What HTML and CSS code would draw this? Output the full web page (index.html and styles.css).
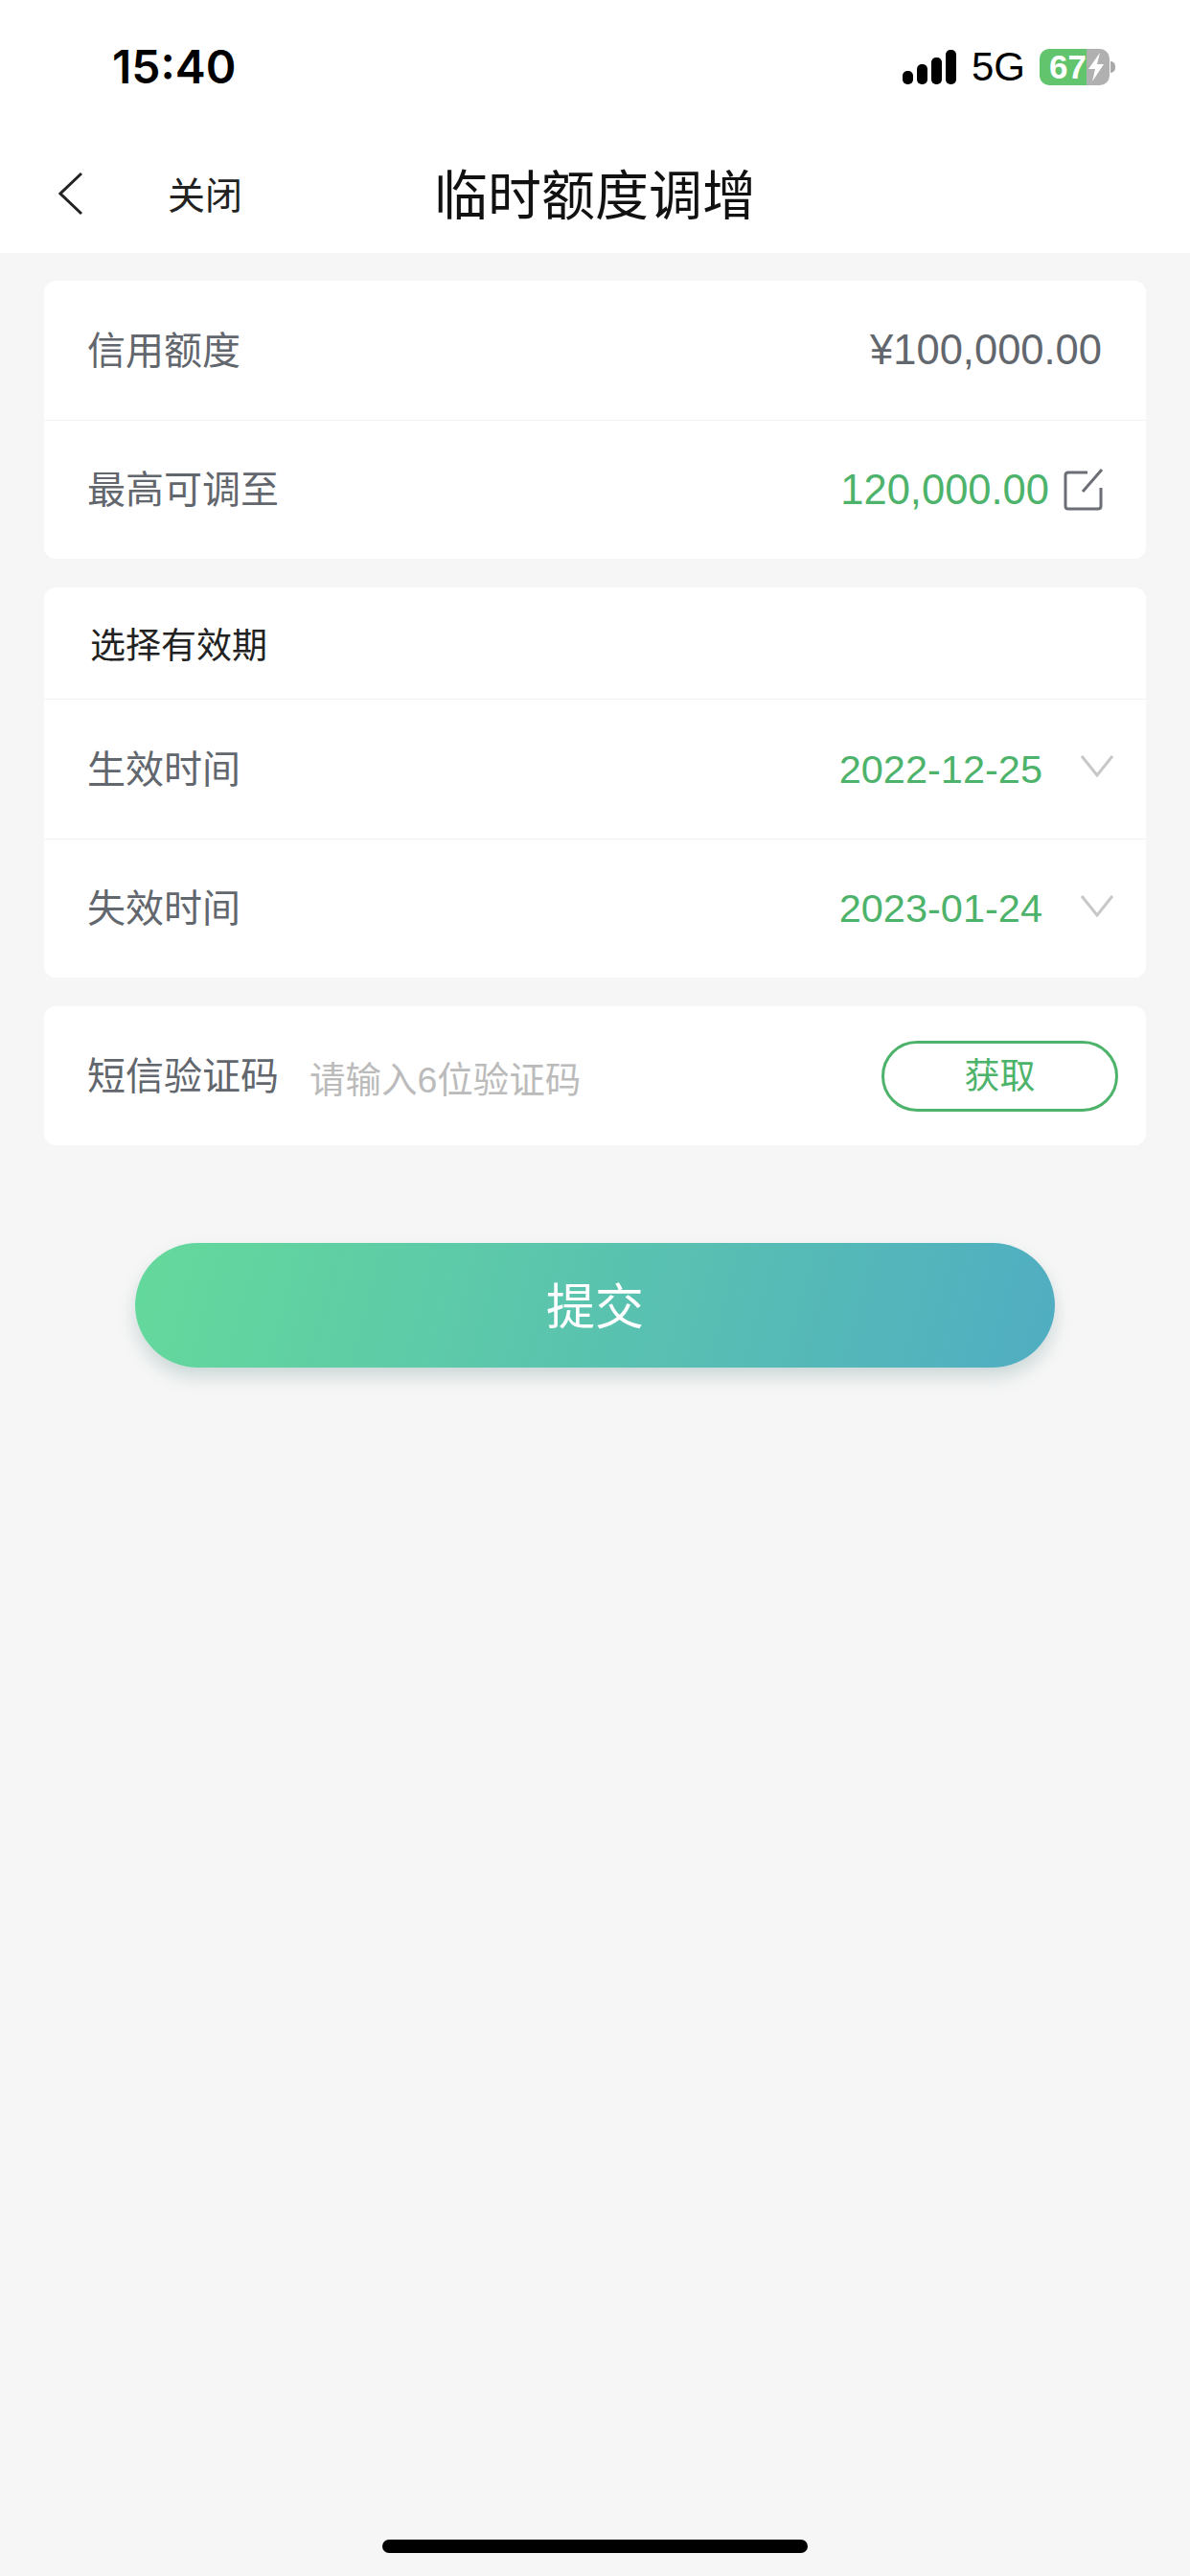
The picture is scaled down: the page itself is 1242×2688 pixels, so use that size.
FILE: index.html
```html
<!DOCTYPE html>
<html lang="zh-CN">
<head>
  <meta charset="UTF-8">
  <meta name="viewport" content="width=device-width, initial-scale=1.0">
  <title>临时额度调增</title>
  <link rel="stylesheet" href="styles.css">
</head>
<body>

  <div class="page">
    <div class="statusbar">
      <div class="time">15:40</div>
      <div class="status-right">
        <svg class="signal" width="56" height="36" viewBox="0 0 56 36">
          <rect x="0" y="22" width="11" height="14" rx="5" fill="#000"/>
          <rect x="15" y="15" width="11" height="21" rx="5" fill="#000"/>
          <rect x="30" y="8" width="11" height="28" rx="5" fill="#000"/>
          <rect x="45" y="0" width="11" height="36" rx="5" fill="#000"/>
        </svg>
        <span class="network">5G</span>
        <div class="battery">
          <div class="battery-body">
            <span class="battery-level">67</span>
            <svg class="bolt" width="18" height="30" viewBox="0 0 18 30">
              <path d="M13 0 L1 17 H8 L5 30 L17 12 H10 Z" fill="#fff"/>
            </svg>
          </div>
          <div class="battery-tip"></div>
        </div>
      </div>
    </div>

    <div class="navbar">
      <div class="nav-left">
        <svg class="back" width="26" height="46" viewBox="0 0 26 46">
          <path d="M24 2 L2 23 L24 44" fill="none" stroke="#222" stroke-width="3"/>
        </svg>
        <span class="close">关闭</span>
      </div>
      <h1>临时额度调增</h1>
      <div></div>
    </div>

    <div class="content">
      <div class="card">
        <div class="row">
          <span class="label">信用额度</span>
          <span class="value">¥100,000.00</span>
        </div>
        <div class="row">
          <span class="label">最高可调至</span>
          <div class="row-right">
            <span class="value green">120,000.00</span>
            <svg class="edit" width="42" height="44" viewBox="0 0 42 44">
              <path d="M25 4 H5 Q2 4 2 7 V39 Q2 42 5 42 H36 Q39 42 39 39 V20" fill="none" stroke="#6b6f75" stroke-width="3"/>
              <path d="M20 24 L40 1" fill="none" stroke="#6b6f75" stroke-width="3"/>
            </svg>
          </div>
        </div>
      </div>

      <div class="card">
        <div class="card-title">选择有效期</div>
        <div class="row">
          <span class="label">生效时间</span>
          <div class="row-right date-right">
            <span class="date">2022-12-25</span>
            <svg class="chevron" width="34" height="24" viewBox="0 0 34 24">
              <path d="M1 2 L17 22 L33 2" fill="none" stroke="#c8c8c8" stroke-width="3"/>
            </svg>
          </div>
        </div>
        <div class="row">
          <span class="label">失效时间</span>
          <div class="row-right date-right">
            <span class="date">2023-01-24</span>
            <svg class="chevron" width="34" height="24" viewBox="0 0 34 24">
              <path d="M1 2 L17 22 L33 2" fill="none" stroke="#c8c8c8" stroke-width="3"/>
            </svg>
          </div>
        </div>
      </div>

      <div class="card">
        <div class="row sms-row">
          <span class="label">短信验证码</span>
          <span class="placeholder">请输入6位验证码</span>
          <button class="get-code">获取</button>
        </div>
      </div>

      <button class="submit">提交</button>
    </div>

    <div class="home-indicator"></div>
  </div>

</body>
</html>
```

FILE: styles.css
```css
* {
  box-sizing: border-box;
}

body {
  margin: 0;
  padding: 0;
  background-color: #f6f6f6;
  font-family: "Liberation Sans", "Noto Sans CJK SC", sans-serif;
}

.page {
  width: 1242px;
  height: 2688px;
  display: flex;
  flex-direction: column;
}

.statusbar {
  height: 140px;
  padding: 50px 78px 0 117px;
  background-color: #fff;
  display: flex;
  justify-content: space-between;
  align-items: flex-start;
}

.time {
  font-family: "Inter", "Liberation Sans", sans-serif;
  font-size: 48px;
  font-weight: 600;
  line-height: 40px;
  color: #000;
}

.status-right {
  display: flex;
  align-items: center;
  height: 40px;
}

.signal {
  margin-right: 16px;
}

.network {
  font-size: 42px;
  line-height: 40px;
  color: #000;
  margin-right: 15px;
}

.battery {
  display: flex;
  align-items: center;
}

.battery-body {
  width: 73px;
  height: 38px;
  border-radius: 10px;
  background: linear-gradient(90deg, #62c46c 0, #62c46c 67%, #b0b0b0 67%, #b0b0b0 100%);
  display: flex;
  align-items: center;
  padding-left: 10px;
}

.battery-level {
  font-size: 35px;
  font-weight: bold;
  color: #fff;
  line-height: 38px;
}

.bolt {
  margin-left: 1px;
}

.battery-tip {
  width: 5px;
  height: 12px;
  margin-left: 1px;
  background-color: #a9a9a9;
  border-radius: 0 6px 6px 0;
}

.navbar {
  height: 124px;
  background-color: #fff;
  display: grid;
  grid-template-columns: 1fr auto 1fr;
  align-items: center;
}

.nav-left {
  display: flex;
  align-items: center;
  padding-left: 61px;
}

.close {
  margin-left: 88px;
  padding-bottom: 3px;
  font-size: 39px;
  color: #222;
}

h1 {
  margin: 0;
  padding-bottom: 6px;
  font-size: 56px;
  font-weight: normal;
  color: #111;
}

.content {
  padding: 29px 46px 0;
  display: flex;
  flex-direction: column;
  gap: 30px;
}

.card {
  background-color: #fff;
  border-radius: 12px;
}

.row {
  height: 145px;
  padding: 0 46px 0 45px;
  display: flex;
  justify-content: space-between;
  align-items: center;
}

.row + .row {
  border-top: 1px solid #f3f3f3;
}

.label {
  padding-bottom: 6px;
  font-size: 40px;
  color: #62666d;
}

.value {
  font-size: 43.5px;
  color: #62666d;
}

.green {
  color: #4db36b;
}

.row-right {
  display: flex;
  align-items: center;
  margin-right: -2px;
}

.edit {
  margin-left: 15px;
}

.date-right {
  margin-right: -12px;
}

.date {
  font-size: 41.5px;
  color: #4db36b;
}

.chevron {
  margin-left: 40px;
  margin-top: -7px;
}

.card-title {
  height: 117px;
  padding-left: 48px;
  border-bottom: 1px solid #f3f3f3;
  display: flex;
  align-items: center;
  font-size: 37px;
  color: #222;
}

.sms-row {
  justify-content: flex-start;
  padding-right: 29px;
}

.placeholder {
  margin-left: 32px;
  padding-top: 2px;
  font-size: 37.5px;
  color: #bbbbbb;
  flex: 1;
}

.get-code {
  width: 247px;
  height: 74px;
  padding: 0 0 5px;
  border: 3px solid #4db36b;
  border-radius: 37px;
  background-color: #fff;
  font-family: inherit;
  font-size: 37px;
  color: #4db36b;
}

.submit {
  width: 960px;
  height: 130px;
  margin: 72px auto 0;
  padding: 0 0 5px;
  border: none;
  border-radius: 65px;
  background: linear-gradient(105deg, #64d99b, #50adc2);
  box-shadow: 0 10px 18px rgba(60, 110, 110, 0.22);
  font-family: inherit;
  font-size: 51px;
  color: #fff;
}

.home-indicator {
  width: 444px;
  height: 14px;
  margin: auto auto 24px;
  border-radius: 7px;
  background-color: #000;
}
```
